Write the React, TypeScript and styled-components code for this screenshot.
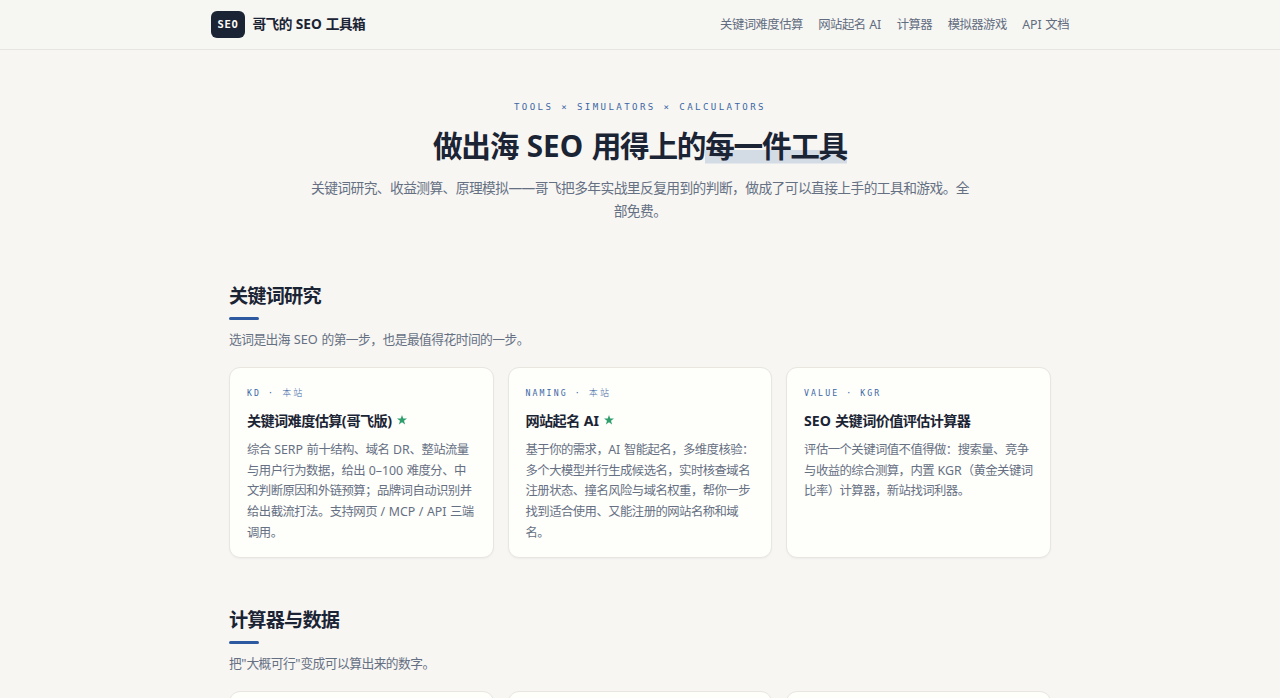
import React from "react";
import styled, { createGlobalStyle } from "styled-components";

const Global = createGlobalStyle`
  *, *::before, *::after { box-sizing: border-box; }
  body {
    margin: 0;
    background: #f7f6f3;
    color: #1b2434;
    font-family: "Noto Sans", "Noto Sans CJK SC", sans-serif;
  }
  h1, h2, h3, p { margin: 0; }
`;

const mono = `"DejaVu Sans Mono", "Noto Sans CJK SC", monospace`;

const Page = styled.div`
  height: 698px;
  overflow: hidden;
`;

/* Chinese text is set slightly tight; Latin runs keep their natural spacing. */
const Tight = styled.span`
  letter-spacing: -0.043em;
`;

const Latin = styled.span`
  letter-spacing: 0;
  word-spacing: 0.03em;
`;

const Header = styled.header`
  height: 50px;
  display: flex;
  justify-content: center;
  background: #f6f6f2;
  border-bottom: 1px solid #e7e5df;
`;

const HeaderInner = styled.div`
  width: 858px;
  display: flex;
  align-items: center;
  justify-content: space-between;
`;

const Brand = styled.div`
  display: flex;
  align-items: center;
  gap: 7.5px;
  white-space: nowrap;
`;

const BrandName = styled.div`
  font-size: 13.7px;
  line-height: 20px;
  font-weight: 700;
  padding-bottom: 1px;
`;

const Mark = styled.span`
  width: 34px;
  height: 27px;
  border-radius: 6px;
  background: #1b2434;
  color: #fdfdf9;
  display: flex;
  align-items: center;
  justify-content: center;
  font: 700 10.5px/1 ${mono};
  letter-spacing: 0.6px;
`;

const Nav = styled.nav`
  display: flex;
  gap: 15.5px;
`;

const NavItem = styled.a`
  font-size: 12.35px;
  line-height: 20px;
  color: #626c7f;
  white-space: nowrap;
`;

const Hero = styled.section`
  display: flex;
  flex-direction: column;
  align-items: center;
  padding-top: 50px;
  text-align: center;
`;

const Eyebrow = styled.div`
  font: 400 9.1px/14px ${mono};
  letter-spacing: 2.4px;
  color: #3b67a5;
  white-space: nowrap;
`;

const Title = styled.h1`
  margin-top: 13px;
  font-size: 29.65px;
  line-height: 37px;
  font-weight: 700;
  white-space: nowrap;
`;

const Marked = styled.span`
  background: linear-gradient(#d3dbe5, #d3dbe5) 0 23px / 100% 13.5px no-repeat;
  display: inline-block;
  height: 37px;
`;

const Lead = styled.p`
  margin-top: 13px;
  width: 661px;
  font-size: 13.76px;
  line-height: 22.8px;
  color: #667083;
`;

const Main = styled.main`
  width: 822px;
  margin: 60.4px auto 0;
  display: flex;
  flex-direction: column;
  gap: 48.5px;
`;

const Heading = styled.h2`
  font-size: 19.2px;
  line-height: 26px;
  font-weight: 700;
`;

const Rule = styled.div`
  width: 30px;
  height: 3px;
  margin-top: 8.1px;
  border-radius: 2px;
  background: #2d59a0;
`;

const Sub = styled.p`
  margin-top: 8.5px;
  font-size: 12.75px;
  line-height: 20px;
  color: #667083;
  white-space: nowrap;
`;

const Grid = styled.div`
  margin-top: 18.9px;
  display: grid;
  grid-template-columns: repeat(3, 1fr);
  gap: 13.6px;
`;

const Card = styled.article`
  min-height: 191px;
  padding: 18px 17px 0;
  border: 1px solid #e8e6df;
  border-radius: 11px;
  background: #fefefb;
  box-shadow: 0 1px 2px rgba(27, 36, 52, 0.04);
`;

const Tag = styled.div`
  font: 400 8.2px/14px ${mono};
  letter-spacing: 2.1px;
  color: #3b67a5;
`;

const Cjk = styled.span`
  font-family: "Noto Sans CJK SC", sans-serif;
  font-weight: 300;
  font-size: 9px;
`;

const CardTitle = styled.h3`
  margin-top: 11px;
  display: flex;
  align-items: center;
  gap: 5px;
  font-size: 14.15px;
  line-height: 20px;
  font-weight: 700;
  white-space: nowrap;
`;

const StarIcon = styled.svg`
  display: block;
  margin-bottom: 2px;
`;

const Body = styled.p`
  margin-top: 8.3px;
  font-size: 12.35px;
  line-height: 20.75px;
  color: #667083;
  white-space: nowrap;
`;

const Line = styled.span`
  display: block;
`;

const Text = ({ children }: { children: string }) => (
  <Tight>
    {children
      .split(/([\x20-\x7e\u2013]+)/)
      .filter(Boolean)
      .map((run, i) => (/^[\x20-\x7e\u2013]/.test(run) ? <Latin key={i}>{run}</Latin> : run))}
  </Tight>
);

const Star = () => (
  <StarIcon width="10" height="10" viewBox="0 0 20 20" fill="#2f9e6d">
    <path d="M10 0l2.5 7H20l-6 4.6 2.2 7.4L10 14.6 3.8 19 6 11.6 0 7h7.5z" />
  </StarIcon>
);

interface Tool {
  tag: string;
  local?: boolean;
  title: string;
  lines: string[];
}

const research: Tool[] = [
  {
    tag: "KD · ",
    local: true,
    title: "关键词难度估算(哥飞版)",
    lines: [
      "综合 SERP 前十结构、域名 DR、整站流量",
      "与用户行为数据，给出 0–100 难度分、中",
      "文判断原因和外链预算；品牌词自动识别并",
      "给出截流打法。支持网页 / MCP / API 三端",
      "调用。",
    ],
  },
  {
    tag: "NAMING · ",
    local: true,
    title: "网站起名 AI",
    lines: [
      "基于你的需求，AI 智能起名，多维度核验：",
      "多个大模型并行生成候选名，实时核查域名",
      "注册状态、撞名风险与域名权重，帮你一步",
      "找到适合使用、又能注册的网站名称和域",
      "名。",
    ],
  },
  {
    tag: "VALUE · KGR",
    title: "SEO 关键词价值评估计算器",
    lines: [
      "评估一个关键词值不值得做：搜索量、竞争",
      "与收益的综合测算，内置 KGR（黄金关键词",
      "比率）计算器，新站找词利器。",
    ],
  },
];

const nav = ["关键词难度估算", "网站起名 AI", "计算器", "模拟器游戏", "API 文档"];

export default function App() {
  return (
    <Page lang="zh-CN">
      <Global />
      <Header>
        <HeaderInner>
          <Brand>
            <Mark>SEO</Mark>
            <BrandName>
              <Text>哥飞的 SEO 工具箱</Text>
            </BrandName>
          </Brand>
          <Nav>
            {nav.map((n) => (
              <NavItem key={n}>
                <Text>{n}</Text>
              </NavItem>
            ))}
          </Nav>
        </HeaderInner>
      </Header>
      <Hero>
        <Eyebrow>TOOLS × SIMULATORS × CALCULATORS</Eyebrow>
        <Title>
          <Text>做出海 SEO 用得上的</Text>
          <Marked>
            <Text>每一件工具</Text>
          </Marked>
        </Title>
        <Lead>
          <Text>
            关键词研究、收益测算、原理模拟——哥飞把多年实战里反复用到的判断，做成了可以直接上手的工具和游戏。全部免费。
          </Text>
        </Lead>
      </Hero>
      <Main>
        <section>
          <Heading>
            <Text>关键词研究</Text>
          </Heading>
          <Rule />
          <Sub>
            <Text>选词是出海 SEO 的第一步，也是最值得花时间的一步。</Text>
          </Sub>
          <Grid>
            {research.map((t) => (
              <Card key={t.title}>
                <Tag>
                  {t.tag}
                  {t.local && <Cjk>本站</Cjk>}
                </Tag>
                <CardTitle>
                  <Text>{t.title}</Text>
                  {t.local && <Star />}
                </CardTitle>
                <Body>
                  {t.lines.map((l) => (
                    <Line key={l}>
                      <Text>{l}</Text>
                    </Line>
                  ))}
                </Body>
              </Card>
            ))}
          </Grid>
        </section>
        <section>
          <Heading>
            <Text>计算器与数据</Text>
          </Heading>
          <Rule />
          <Sub>
            <Text>把"大概可行"变成可以算出来的数字。</Text>
          </Sub>
          <Grid>
            <Card />
            <Card />
            <Card />
          </Grid>
        </section>
      </Main>
    </Page>
  );
}
